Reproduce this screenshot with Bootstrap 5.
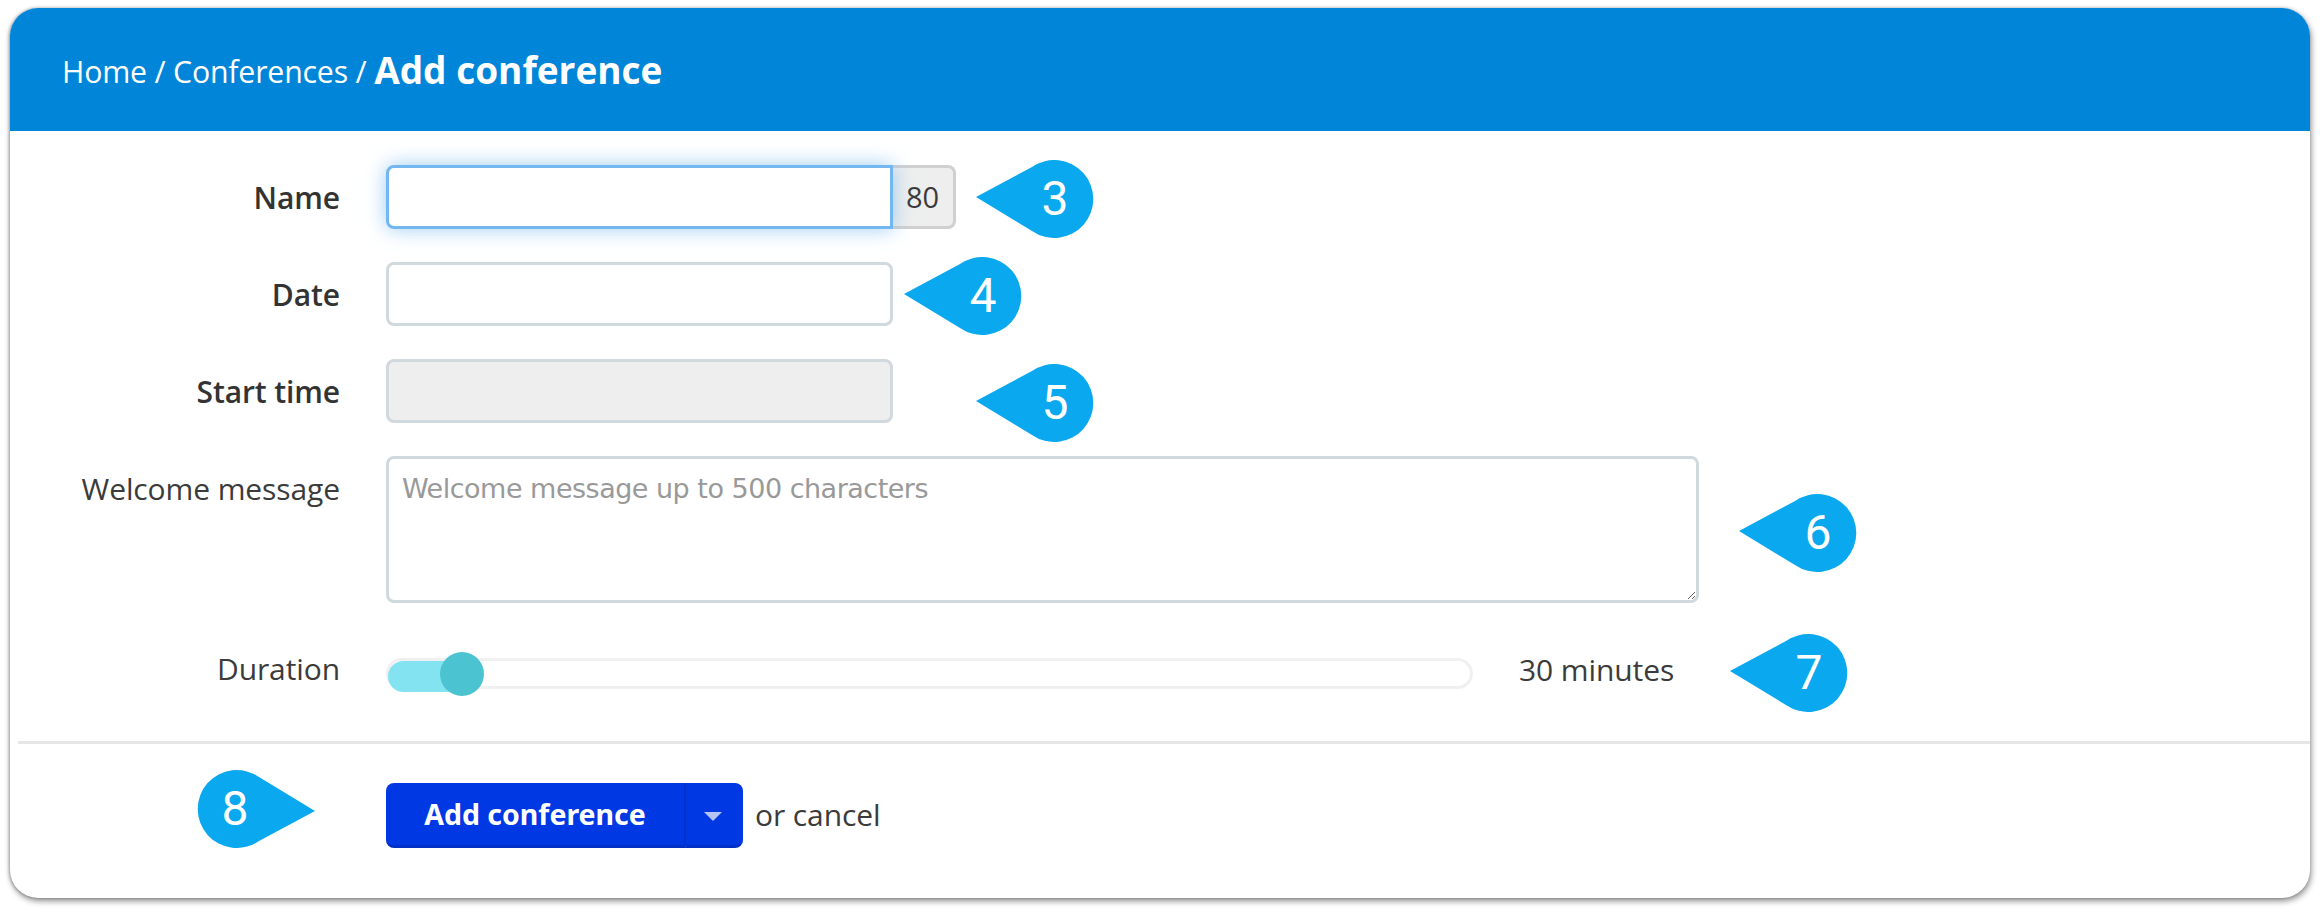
<!DOCTYPE html>
<html lang="en">
<head>
<meta charset="utf-8">
<title>Add conference</title>
<link href="https://cdn.jsdelivr.net/npm/bootstrap@5.3.0/dist/css/bootstrap.min.css" rel="stylesheet">
<style>
html, body { background:#fff; height:100%; }
body { font-family:"Open Sans","Noto Sans",sans-serif; color:#3b3b3b; padding:8px 10px 12px; overflow:hidden; }
.shell { position:relative; height:890px; background:#fff; border-radius:28px; box-shadow:1px 3px 6px rgba(0,0,0,.45), -1px 0 3px rgba(0,0,0,.25); overflow:hidden; }
.crumbs { height:123px; background:#0085d8; color:#fff; padding:4px 0 0 52px; font-size:30.3px; letter-spacing:-.2px; }
.crumbs strong { font-size:37px; font-weight:700; letter-spacing:0; margin-top:-3px; }
.formzone { padding:34px 0 0; }
.frow { margin-bottom:33px; }
.flabel { width:330px; flex:none; text-align:right; font-size:30px; line-height:36px; margin:0 46px 0 0; color:#3b3b3b; letter-spacing:-.1px; }
.flabel.req { font-weight:600; color:#333; padding-top:2px; }
.lbl-top { margin-top:15px; }
.lbl-dur { margin-top:2px; }
.fctl.form-control { width:507px; height:64px; flex:none; border:3px solid #d0d9de; border-radius:8px; box-shadow:none; }
.fctl.form-control:disabled { background:#eee; }
.fctl.on.form-control { border-color:#74b6ef; border-radius:8px 0 0 8px; box-shadow:0 0 20px rgba(116,182,239,.7); position:relative; z-index:1; }
.cnt.input-group-text { width:64px; height:64px; padding:0; justify-content:center; background:#eee; border:3px solid #d0d0d0; border-left:0; border-radius:0 8px 8px 0; font-size:29px; color:#3b3b3b; }
.area.form-control { width:1313px; height:147px; flex:none; border:3px solid #d0d9de; border-radius:8px; padding:11px 13px 8px; font-family:"DejaVu Sans",sans-serif; font-size:27px; line-height:38px; }
.area.form-control::placeholder { color:#999; letter-spacing:-.5px; }
.wel { margin-bottom:46px; }
.slidewrap { position:relative; width:1087px; height:31px; margin-top:9px; border:3px solid #f0f0f0; border-radius:16px; flex:none; }
.slidefill { position:absolute; left:-1px; top:0; width:75px; height:31px; background:#84e3f1; border-radius:16px 0 0 16px; }
.slideknob { position:absolute; left:51px; top:-9px; width:44px; height:44px; border-radius:50%; background:#4cc3d0; }
.mins { margin-left:46px; font-size:30px; line-height:36px; margin-top:3px; letter-spacing:-.1px; }
.rule { height:3px; background:#e6e6e6; margin:52px 0 39px 8px; }
.go { height:65px; margin-left:376px; }
.gobtn.btn { height:65px; background:#0038e3; color:#fff; border:0; border-bottom:3px solid #0030c4; font-weight:700; font-size:28.5px; font-family:"Noto Sans","Open Sans",sans-serif; padding:0; }
.gomain.btn { width:301px; border-radius:8px 0 0 8px; border-right:3px solid #0032cc; }
.gocaret.btn { width:57px; border-radius:0 8px 8px 0; display:flex; align-items:center; justify-content:center; }
.tri { width:0; height:0; border-left:9px solid transparent; border-right:9px solid transparent; border-top:9px solid #b5c4f5; margin-top:4px; margin-left:-3px; }
.orcancel { margin-left:12px; font-size:30px; color:#3b3b3b; letter-spacing:-.1px; margin-top:-2px; }
.pin { position:absolute; width:118px; height:78px; }
.pin path { fill:#0aa8ee; }
.pin text { fill:#fff; font-family:Roboto,sans-serif; font-weight:400; font-size:48px; text-anchor:middle; }
.p3 { left:966px; top:152px; } .p4 { left:894px; top:249px; } .p5 { left:966px; top:356px; }
.p6 { left:1729px; top:486px; } .p7 { left:1720px; top:626px; } .p8 { left:187px; top:762px; }
</style>
</head>
<body>
<div class="shell">
  <div class="crumbs d-flex align-items-center">Home / Conferences /&nbsp;<strong>Add conference</strong></div>
  <form class="formzone">
    <div class="frow d-flex align-items-center">
      <label class="flabel req" for="f1">Name</label>
      <div class="input-group w-auto flex-nowrap">
        <input id="f1" class="form-control fctl on" type="text">
        <span class="input-group-text cnt">80</span>
      </div>
    </div>
    <div class="frow d-flex align-items-center">
      <label class="flabel req" for="f2">Date</label>
      <input id="f2" class="form-control fctl" type="text">
    </div>
    <div class="frow d-flex align-items-center">
      <label class="flabel req" for="f3">Start time</label>
      <input id="f3" class="form-control fctl" type="text" disabled>
    </div>
    <div class="frow wel d-flex align-items-start">
      <label class="flabel lbl-top" for="f4">Welcome message</label>
      <textarea id="f4" class="form-control area" placeholder="Welcome message up to 500 characters"></textarea>
    </div>
    <div class="d-flex align-items-start">
      <div class="flabel lbl-dur">Duration</div>
      <div class="slidewrap"><div class="slidefill"></div><div class="slideknob"></div></div>
      <div class="mins">30 minutes</div>
    </div>
    <div class="rule"></div>
    <div class="go d-flex align-items-center">
      <div class="btn-group">
        <button type="button" class="btn gobtn gomain">Add conference</button>
        <button type="button" class="btn gobtn gocaret" aria-label="More"><span class="tri"></span></button>
      </div>
      <span class="orcancel">or cancel</span>
    </div>
  </form>

  <svg class="pin p3" viewBox="0 0 118 78"><path d="M0 37 L56 7 A39 39 0 1 1 56 71 Z"/><text x="79" y="55">3</text></svg>
  <svg class="pin p4" viewBox="0 0 118 78"><path d="M0 37 L56 7 A39 39 0 1 1 56 71 Z"/><text x="79" y="55">4</text></svg>
  <svg class="pin p5" viewBox="0 0 118 78"><path d="M0 37 L56 7 A39 39 0 1 1 56 71 Z"/><text x="79" y="55">5</text></svg>
  <svg class="pin p6" viewBox="0 0 118 78"><path d="M0 37 L56 7 A39 39 0 1 1 56 71 Z"/><text x="79" y="55">6</text></svg>
  <svg class="pin p7" viewBox="0 0 118 78"><path d="M0 37 L56 7 A39 39 0 1 1 56 71 Z"/><text x="79" y="55">7</text></svg>
  <svg class="pin p8" viewBox="0 0 118 78"><path d="M118 41 L62 71 A39 39 0 1 1 62 7 Z"/><text x="38" y="55">8</text></svg>
</div>
</body>
</html>
